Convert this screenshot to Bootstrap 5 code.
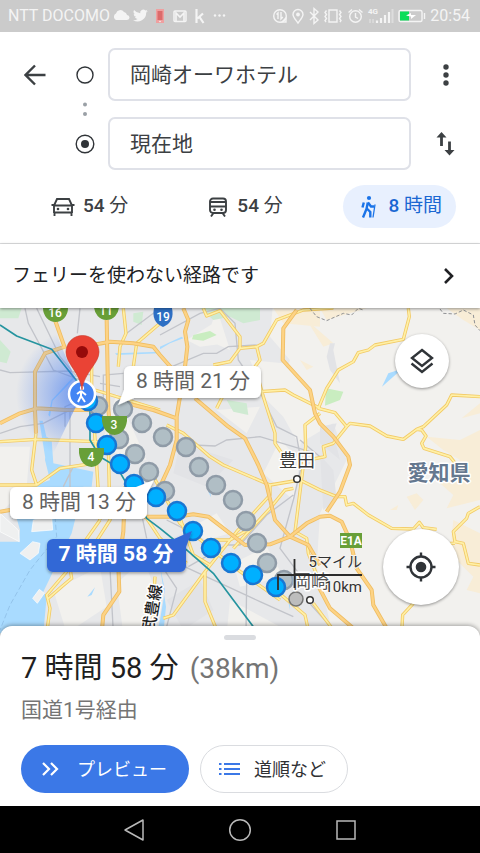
<!DOCTYPE html>
<html lang="ja">
<head>
<meta charset="utf-8">
<meta name="viewport" content="width=device-width, initial-scale=1">
<title>経路</title>
<link href="https://cdn.jsdelivr.net/npm/bootstrap@5.3.0/dist/css/bootstrap.min.css" rel="stylesheet">
<style>
body{font-family:Roboto,"Noto Sans CJK JP",sans-serif;color:#3c4043;background:#fff}
svg{display:block;flex:none}
.icon-btn{border:0;background:none;padding:0;color:#3c4043}
.status-bar{height:32px;background:#cbcbcb;color:#f4f4f4;font-size:16px;padding:0 10px 0 8px}
.route-form{display:grid;grid-template-columns:54px 46px 1fr 69px;grid-template-rows:53px 16px 53px;padding:16px 0 0 8px;place-items:center}
.place-input{width:100%;height:100%;border:2px solid #dfe1e8;border-radius:7px;font-size:21px;color:#3c4043;padding:0 20px 3px;box-shadow:none}
.modes{padding:15px 3px 15px 11px;border-bottom:1px solid #dfe0e2}
.mode-btn{height:43px;border:0;border-radius:22px;background:none;color:#3c4043;font-size:19px;padding:0 14px 0 16px}
.mode-btn b{font-weight:500}
.mode-btn.is-on{background:#e8f0fe;color:#1a67d2}
.notice{height:64px;font-size:19px;color:#202124;padding:0 25px 0 12px;position:relative;z-index:2;background:#fff;box-shadow:0 1px 3px #0006;border:0}
.map{position:relative;min-height:330px;overflow:hidden;background:#f2f1ee}
.map>svg{width:100%;height:100%;position:absolute;inset:0}
.round-btn{position:absolute;border:0;border-radius:50%;background:#fff;color:#303438;box-shadow:0 1px 3px #0006;display:grid;place-items:center;padding:0}
.layers-btn{width:54px;height:54px;right:31px;top:26px}
.locate-btn{width:76px;height:76px;right:21px;top:221px}
.sheet{position:relative;z-index:2;margin-top:-12px;background:#fff;border-radius:12px 12px 0 0;box-shadow:0 -1px 4px #0005;padding:9px 21px 13px}
.handle{width:32px;height:5px;border-radius:3px;background:#dadce0}
.trip-time{font-size:29px;line-height:36px;color:#1f1f1f;margin-top:10px}
.trip-time span{color:#757575;font-size:28px}
.via{font-size:21px;line-height:30px;color:#757575;margin:8px 0 20px}
.pill{height:48px;border-radius:24px;font-size:18px;display:flex;align-items:center}
.pill-main{background:#3b78e7;color:#fff;border:0;padding:0 22px 0 20px;gap:18px}
.pill-line{background:#fff;color:#303134;border:1px solid #dadce0;padding:0 21px 0 18px;gap:14px}
.pill-main:hover{background:#3b78e7;color:#fff}
.sys-nav{height:48px;background:#000;gap:83px}
</style>
<script src="https://cdn.jsdelivr.net/npm/bootstrap@5.3.0/dist/js/bootstrap.bundle.min.js"></script>
</head>
<body>
<div class="d-flex flex-column min-vh-100">
<header class="status-bar d-flex align-items-center justify-content-between">
  <div class="d-flex align-items-center">
    <span>NTT DOCOMO</span>
    <svg class="ms-1" width="114" height="20" viewBox="0 0 114 20" fill="#f4f4f4">
      <path d="M2 14a3.600 3.600 0 0 1 0-6.500 4.500 4.500 0 0 1 8-1.500 4 4 0 0 1 3 3 2.500 2.500 0 0 1 0 5z"/>
      <path transform="translate(19 2) scale(.64)" d="M23 4.600a9 9 0 0 1-2.700.8 4.700 4.700 0 0 0 2-2.600 9 9 0 0 1-3 1.100 4.700 4.700 0 0 0-8 4.300A13.400 13.400 0 0 1 1.600 3.300a4.700 4.700 0 0 0 1.500 6.300 5 5 0 0 1-2.100-.6 4.700 4.700 0 0 0 3.800 4.700 5 5 0 0 1-2.100.1 4.700 4.700 0 0 0 4.400 3.300A9.500 9.500 0 0 1 0 19a13.400 13.400 0 0 0 20.600-11.900A9 9 0 0 0 23 4.600z"/>
      <path d="M42 3h8v14h-8z" fill="#efa0a0"/><path d="M43.500 5h5v9h-5z" fill="#dc6b6b"/><circle cx="46" cy="15.500" r=".8"/>
      <rect x="60" y="5" width="12" height="10.500" rx="1" fill="none" stroke="#f4f4f4" stroke-width="1.500"/><path d="M62 15V7l4 4 4-4v8" fill="none" stroke="#f4f4f4" stroke-width="1.600"/>
      <path d="M82.500 3v14M89 7.500l-5.500 5M85.500 11l4 6" fill="none" stroke="#f4f4f4" stroke-width="2.200"/>
      <circle cx="101" cy="9.500" r="1.200"/><circle cx="105.500" cy="9.500" r="1.200"/><circle cx="110" cy="9.500" r="1.200"/>
    </svg>
  </div>
  <div class="d-flex align-items-center gap-1">
    <svg width="154" height="20" viewBox="0 0 154 20" fill="none" stroke="#f4f4f4" stroke-width="1.400">
      <circle cx="8" cy="10" r="6.300"/><path d="M6 13V7L4.500 8.500M9 6v7l1.800-2M10 16l4-4v4z"/>
      <path d="M26 17c-3-4-5-6-5-8.500a5 5 0 0 1 10 0C31 11 29 13 26 17z"/><circle cx="26" cy="8.500" r="1.200" fill="#f4f4f4"/>
      <path d="M38 6l8 8-4 3.500v-15L46 6l-8 8"/>
      <path d="M57 4h8v12h-8zM54.500 4.500l-1.500 2 1.500 2-1.500 2 1.500 2-1.500 2 1 1.500M67.500 4.500l1.500 2-1.500 2 1.500 2-1.500 2 1.500 2-1 1.500"/>
      <circle cx="83.500" cy="10.500" r="5.800"/><path d="M83.500 7v4l2.500 1.500M76.500 6.500l3.500-3M90.500 6.500L87 3.500"/>
      <path d="M105 17v-2.500M109 17v-5M113 17V9M117 17V6" stroke-width="2.200"/><path d="M120.500 17V3" stroke="#ddd" stroke-width="2"/>
      <path d="M98 17v-4M101 17v-4" stroke="#dedede"/>
      <rect x="127" y="4.500" width="23" height="11" rx="1.500"/><path d="M152.500 7v6"/><path d="M128 5.500h9v9h-9z" fill="#0bdd59" stroke="none"/><path d="M134 9.500l5-2.500v2h5l-5 4v-2.500z" fill="#fff" stroke="none"/>
      <text x="96" y="8" font-size="8" font-weight="700" stroke="none" fill="#f4f4f4">4G</text>
    </svg>
    <span>20:54</span>
  </div>
</header>

<form class="route-form">
  <button type="button" class="icon-btn" aria-label="戻る"><svg width="22" height="22" viewBox="0 0 22 22" fill="none" stroke="currentColor" stroke-width="2.400"><path d="M21.500 11H2M11 1.500L1.500 11l9.500 9.500"/></svg></button>
  <label for="from"><svg width="18" height="18" viewBox="0 0 18 18" fill="none" stroke="#303438" stroke-width="1.400"><circle cx="9" cy="9" r="8"/></svg></label>
  <input class="form-control place-input" id="from" aria-label="出発地" value="岡崎オーワホテル">
  <button type="button" class="icon-btn" aria-label="メニュー"><svg width="8" height="24" viewBox="0 0 8 24" fill="currentColor"><circle cx="4" cy="4" r="2.700"/><circle cx="4" cy="12" r="2.700"/><circle cx="4" cy="20" r="2.700"/></svg></button>
  <span></span>
  <svg width="6" height="16" viewBox="0 0 6 16" fill="#9aa0a6"><circle cx="3" cy="3.500" r="2"/><circle cx="3" cy="13" r="2"/></svg>
  <span></span><span></span><span></span>
  <label for="to"><svg width="20" height="20" viewBox="0 0 20 20" fill="none" stroke="#303438" stroke-width="1.400"><circle cx="10" cy="10" r="8.800"/><circle cx="10" cy="10" r="4" fill="#303438" stroke="none"/></svg></label>
  <input class="form-control place-input" id="to" aria-label="目的地" value="現在地">
  <button type="button" class="icon-btn" aria-label="入れ替え"><svg width="20" height="26" viewBox="0 0 20 26" fill="currentColor"><path d="M.5 6.500L5.500 1l5 5.500H6.900V15H4.100V6.500zM8.500 19l5 5.500 5-5.500h-3.600v-8.500h-2.800V19z"/></svg></button>
</form>

<nav class="modes d-flex" aria-label="交通手段">
  <div class="col d-flex justify-content-center"><button class="mode-btn d-flex align-items-center gap-2">
    <svg width="24" height="20" viewBox="0 0 24 20" fill="none" stroke="currentColor" stroke-width="1.900"><path d="M3 16V8.500L6 2h12l3 6.500V16M3 8.500h18M3 15.500h18M.5 8H4M20 8h3.500M3.500 15v4M20.500 15v4"/><g fill="currentColor" stroke="none"><circle cx="7" cy="12" r="1.300"/><circle cx="17" cy="12" r="1.300"/></g></svg><span><b>54</b> 分</span></button></div>
  <div class="col d-flex justify-content-center"><button class="mode-btn d-flex align-items-center gap-2">
    <svg width="22" height="20" viewBox="0 0 22 20" fill="none" stroke="currentColor" stroke-width="1.900"><rect x="3" y="1.500" width="16" height="14.500" rx="3"/><path d="M3 5h16M3 9.500h16M6.500 16L4 19.500M15.500 16l2.500 3.500"/><g fill="currentColor" stroke="none"><circle cx="7.500" cy="12.800" r="1.300"/><circle cx="14.500" cy="12.800" r="1.300"/></g></svg><span><b>54</b> 分</span></button></div>
  <div class="col d-flex justify-content-center"><button class="mode-btn is-on d-flex align-items-center gap-2" aria-pressed="true">
    <svg width="18" height="24" viewBox="0 0 18 24" fill="none" stroke="#1a73e8"><circle cx="10" cy="3" r="2.100" fill="#1a73e8" stroke="none"/><path d="M8.800 7.500L7.500 14 4 22.500M7.800 13.500l3.500 3.500v5.500M9 7.500l3 4h3" stroke-width="2.400"/><path d="M4.800 7.500L3.500 12.500" stroke-width="2.400"/><path d="M16 9.500L14 22.500" stroke-width="1.300"/></svg><span class="ms-1"><b>8</b> 時間</span></button></div>
</nav>

<button class="notice d-flex align-items-center justify-content-between w-100 text-start">
  <span>フェリーを使わない経路です</span>
  <svg width="12" height="16" viewBox="0 0 12 16" fill="none" stroke="#202124" stroke-width="2.600"><path d="M2 1l7 7-7 7"/></svg>
</button>

<main class="map flex-grow-1">
<svg viewBox="0 308 480 330" preserveAspectRatio="xMidYMin slice" aria-label="地図">
  <defs>
    <radialGradient id="beam" gradientUnits="userSpaceOnUse" cx="82" cy="394" r="66"><stop offset="0" stop-color="#3a75f0" stop-opacity=".75"/><stop offset=".5" stop-color="#3a75f0" stop-opacity=".35"/><stop offset="1" stop-color="#3a75f0" stop-opacity="0"/></radialGradient>
    <filter id="sh" x="-10%" y="-20%" width="120%" height="150%"><feDropShadow dx="0" dy="1.500" stdDeviation="1.500" flood-opacity=".35"/></filter>
    <g id="yellowRoads">
      <path d="M370 25L378 100 360 140 355 200M480 70L410 130 400 200M0 425L110 418 290 425 340 425M275 160V260L290 495 300 660M325 440L330 660 240 800M285 270L480 330M610 25L620 48 660 32 720 110V145L770 140 790 130 830 60 910 30 1000 24M720 145L690 185 640 195M770 140L780 180 765 200 790 290 825 400V430L870 495M780 275L855 270 880 285 960 325M960 340L915 375 917 440 885 695 920 715 925 760 960 850M500 375L550 400 630 470 670 495 810 555 900 540 960 570M650 325L690 245"/>
      <path d="M1225 25L1228 50 1210 118 1125 135 1105 150 1075 158 1060 185 1015 210 980 265 955 325 1005 338 1040 380 1050 370 1110 378 1160 408 1210 418 1250 388 1270 380 1340 315 1355 285 1440 290M1250 388L1265 390 1278 408 1265 430 1272 445 1350 470 1370 495M1040 380L1000 430 970 440 975 470 925 480M960 570L1010 590H1035L1040 615 1060 610 1105 645 1175 685 1240 687 1258 667 1270 683 1310 688M1440 620L1405 640 1400 655 1360 695 1365 725 1390 730 1405 790 1440 795M1350 730H1365M1240 910L1208 945 1205 1000"/>
      <path d="M490 955L520 945 615 815 710 695 810 585V555M615 815V905L650 990M540 655L580 765 630 795M700 745L810 625 855 570 880 565M820 865L915 945 925 990M620 720L690 720 760 680M300 660L240 745 200 815 140 885 150 925 140 1000M210 805L215 835 185 860 145 895M108 400L95 510 110 555H0M110 555L180 505 280 490M440 655L480 715 560 790M460 530L540 670 700 800 840 900M940 910L1000 990M465 830L455 1000"/>
    </g>
    <g id="orangeRoads">
      <path d="M165 60L195 145M250 140L330 125 400 130 460 140 480 165 520 210M195 140L135 160 105 215V330L108 400M320 60L325 330 335 420M0 370L60 340 110 325 200 330 300 330M550 25L565 60 555 95 562 140 555 200 540 290 530 350V420L510 495 480 560M380 310L460 330 530 355M585 295L685 380 735 415 775 495 800 555 825 660 870 710 925 735 960 795M890 30L850 85 848 180 930 270 945 340 960 370 1000 410 1045 470 1050 495 1020 575 980 635"/>
      <path d="M430 650H530L580 643 625 650 735 735 810 733 870 710 920 670 960 650 990 647 1025 665 1050 720 1070 805 1115 870 1120 915 1160 985M940 830L990 925 1060 985M375 560L370 695 355 795 358 875 310 945 305 1000M0 635L30 630"/>
    </g>
  </defs>
  <g transform="translate(0 300) scale(.33333)">
    <path fill="#e7e8ea" d="M0 0H820L810 110 870 180 830 300 900 430 1000 370 1040 480 960 640 950 800 1000 1010H0z"/>
    <g fill="#f2f1ee"><path d="M650 25L690 150 620 120zM750 180L850 190 930 300 900 440 850 350 800 300zM560 120L640 70 680 130 600 140zM350 280L440 480 300 450zM0 440L90 440 80 560 0 640zM650 330L780 320 740 400zM840 420L900 480 880 600 790 520zM560 690L650 640 690 700 620 720zM700 790L800 740 850 830 720 860zM350 850L430 780 480 900 440 1000 370 1000zM690 900L840 980 680 1000zM160 870L300 800 320 920 200 1000z"/></g>
    <g fill="#f8edd7"><path d="M820 25H960V80L850 70zM920 60L1000 130 970 140zM900 180L940 200 920 210zM960 25H1100L980 60zM1340 25H1440V90L1390 60zM1440 310L1385 355 1440 340zM1440 390L1380 420 1280 410 1330 450 1380 480 1320 550 1360 585 1340 625 1440 600zM1220 590L1250 580 1270 600 1245 630zM1170 630L1195 615 1190 630zM1360 660L1440 700V880L1400 870 1420 830 1350 760z"/></g>
    <g fill="#e2e3e6"><path d="M990 130H1005L1000 150 1020 250 990 210 980 170zM960 380L1010 370 1000 400 1020 480 960 430zM960 465L1000 510 1010 600 970 630zM540 430L700 480 620 560 520 520zM500 900L600 840 640 930 550 990z"/></g>
    <g fill="#cfead2"><path d="M0 24H65L55 55H0zM0 120L32 155 20 190 0 185zM600 24H780V60L730 70 690 50 640 60zM680 300L740 310 745 345 700 335zM400 40L430 35 425 75 400 65z"/><path fill="#c9edc0" d="M580 105L630 93 650 105 610 122 576 118zM978 265L1030 275 1020 300 975 317z"/></g>
    <g fill="#a9dbff"><path d="M140 410L155 420 160 490 280 515 275 560 250 560 225 660 215 700 130 875 140 890 130 1000H0V725L58 725 60 690 40 620 100 600 95 560 150 540 135 480zM145 345L155 300 225 225 228 230 158 302 150 350zM480 140L545 110 550 115 510 130 480 148zM345 160L480 155V160L350 165zM1146 260L1165 220 1195 210 1195 217zM262 890L285 862 275 885zM625 575L630 560 633 592zM865 905L870 890V930zM480 800L495 870 480 960 470 1000 490 1000 498 920zM118 362H128L160 500H140z"/></g>
    <g fill="#eff0f0" stroke="#fff" stroke-width="2"><path d="M60 760L98 725 120 730 115 760 90 780zM100 660L155 650 158 690 95 695zM98 895L118 868 133 880 112 910zM0 640L55 690 58 725 0 695z"/></g>
    <path d="M165 650L170 710 90 810 30 915 0 990" stroke="#88b7df" fill="none" stroke-width="2" stroke-dasharray="16 8"/>
    <g fill="none" stroke="#c2c4ca" stroke-width="4">
      <path d="M75 25L85 70 160 210 240 240M110 25L180 170 230 230M0 210L30 218 210 213 300 230M0 400L60 380 130 370 250 310M210 330V600M240 25L232 100M195 380V320L280 285M310 300V225L370 220M360 260L300 250M480 25L380 100M480 215L610 160H650L685 140 770 135M480 105L600 40 660 25 705 70 715 180 780 275 810 340 830 380 890 410 905 495 880 600 840 745 930 865M580 435L645 438 680 420 780 410 880 440 930 455M480 760L565 805 780 905 880 950M740 845L738 1000M530 865L500 980M565 800L680 735H720L800 645 880 585M420 620L440 715M220 500L190 560M330 805L340 1000M580 700L500 660M900 420L960 470M920 900L1010 1000M480 790L530 865"/>
    </g>
    <g fill="none" stroke-linejoin="round">
      <use href="#yellowRoads" stroke="#f2ca66" stroke-width="10"/><use href="#yellowRoads" stroke="#fff0a6" stroke-width="5"/>
      <use href="#orangeRoads" stroke="#efbd62" stroke-width="12"/><use href="#orangeRoads" stroke="#fdd385" stroke-width="7"/>
      <path d="M0 75L50 108 155 148 240 255 270 330V420L300 470 350 500 440 655 480 685 560 750 640 820 760 980 790 1010" stroke="#25949f" stroke-width="5"/>
      <path d="M1320 27L1330 40 1365 42 1390 30 1420 45 1425 75 1440 92M930 25L950 50 980 62 1030 40 1055 45 1075 25 1090 30" stroke="#8f9194" stroke-width="3" stroke-dasharray="10 6"/>
    </g>
  </g>

  <path d="M82 394L56 334 16 340V460H50z" fill="url(#beam)"/>

  <g fill="#b0bec5" stroke="#8f9ba7" stroke-width="2.500">
    <circle cx="98" cy="406" r="9"/><circle cx="119" cy="439" r="9"/><circle cx="123" cy="409" r="9"/><circle cx="142" cy="423" r="9"/><circle cx="163" cy="437" r="9"/><circle cx="186" cy="447" r="9"/><circle cx="135" cy="454" r="9"/><circle cx="149" cy="472" r="9"/><circle cx="199" cy="467" r="9"/><circle cx="216" cy="485" r="9"/><circle cx="165" cy="491" r="9"/><circle cx="233" cy="500" r="9"/><circle cx="246" cy="521" r="9"/><circle cx="257" cy="543" r="9"/><circle cx="267" cy="563" r="9"/><circle cx="284" cy="580" r="9"/>
  </g>
  <g fill="#00b0ff" stroke="#1976d2" stroke-width="2.500">
    <circle cx="88" cy="401" r="9"/><circle cx="96" cy="423" r="9"/><circle cx="107" cy="445" r="9"/><circle cx="120" cy="464" r="9"/><circle cx="134" cy="484" r="9"/><circle cx="156" cy="497" r="9"/><circle cx="177" cy="511" r="9"/><circle cx="193" cy="531" r="9"/><circle cx="211" cy="548" r="9"/><circle cx="231" cy="563" r="9"/><circle cx="253" cy="575" r="9"/><circle cx="276" cy="587" r="9"/>
  </g>
  <circle cx="296" cy="599" r="7" fill="#bdbdbd" stroke="#757575" stroke-width="1.500"/>

  <g fill="#689f38">
    <path d="M43 308H68A12.500 14 0 0 1 43 308zM94 306H119A12.500 14 0 0 1 94 306zM102 416H127V421Q125 434 114.500 435 104 434 102 421zM79 448H104V453Q102 466 91.500 467 81 466 79 453z"/>
    <path d="M340 533h22v15h-22z"/>
  </g>
  <path d="M154 308L172 308Q175 322 163 327 151 322 154 308z" fill="#2d6fc4"/>
  <g fill="#fff" font-size="12" font-weight="500" text-anchor="middle">
    <text x="55" y="317">16</text><text x="106" y="315">11</text><text x="163" y="321">19</text><text x="114" y="429">3</text><text x="91" y="461">4</text><text x="351" y="545" font-weight="700">E1A</text>
  </g>

  <g paint-order="stroke" stroke="#fff" stroke-width="3" stroke-linejoin="round" text-anchor="middle">
    <text x="297" y="467" font-size="18" fill="#3a3a3a">豊田</text>
    <text x="439" y="480" font-size="21" font-weight="700" fill="#65788f">愛知県</text>
    <text x="311" y="588" font-size="18" fill="#555">岡崎</text>
    <text transform="translate(152 608) rotate(-80)" font-size="16" font-weight="500" fill="#222" x="0" y="6">武豊線</text>
  </g>
  <g fill="#fff" stroke="#333" stroke-width="1.500"><circle cx="297" cy="479" r="3.300"/><circle cx="310" cy="600" r="3.300"/></g>
  <path d="M278 590V575H362M294.500 559V588" fill="none" stroke="#2c2c2c" stroke-width="1.800"/>
  <g text-anchor="end" font-size="15" fill="#333" paint-order="stroke" stroke="#f5f4f1" stroke-width="2"><text x="362" y="567">5マイル</text><text x="362" y="592">10km</text></g>

  <g filter="url(#sh)">
    <path d="M130 366H255a6 6 0 0 1 6 6V392a6 6 0 0 1-6 6H134L118 405 124 390V372a6 6 0 0 1 6-6z" fill="#fff"/>
    <path d="M16 487H136L154 480 147 494V513a6 6 0 0 1-6 6H16a6 6 0 0 1-6-6V493a6 6 0 0 1 6-6z" fill="#fff"/>
    <path d="M53 539H174L192 531 186 547V566a6 6 0 0 1-6 6H53a6 6 0 0 1-6-6V545a6 6 0 0 1 6-6z" fill="#3367d6"/>
  </g>
  <g text-anchor="middle" font-size="21" fill="#616161">
    <text x="193" y="388">8 時間 21 分</text><text x="79" y="509">8 時間 13 分</text><text x="116" y="561" fill="#fff" font-weight="700">7 時間 58 分</text>
  </g>

  <circle cx="82" cy="394" r="13" fill="#4285f4" stroke="#fff" stroke-width="2.500"/>
  <g fill="none" stroke="#fff" stroke-width="2"><path d="M81 391V396L78 402M81 396L85 402M81 391L86 395M81 391L77 394"/><circle cx="82" cy="388" r="1.200"/></g>
  <path d="M82 390C80 372 66 364 66 352a16.500 16.500 0 0 1 33 0C99 364 84 372 82 390z" fill="#ea4335" stroke="#c93a2c" stroke-width=".6"/><circle cx="82" cy="352" r="6" fill="#960a0a"/>
</svg>
<button class="round-btn layers-btn" aria-label="レイヤ"><svg width="26" height="26" viewBox="0 0 26 26" fill="none" stroke="currentColor" stroke-width="2.400"><path d="M13 2L23 10 13 18 3 10zM2.500 15.500L13 24l10.500-8.500"/></svg></button>
<button class="round-btn locate-btn" aria-label="現在地を表示"><svg width="30" height="30" viewBox="0 0 30 30" fill="none" stroke="currentColor" stroke-width="2.400"><circle cx="15" cy="15" r="10.500"/><path d="M15 .5V5M15 25v4.500M.5 15H5M25 15h4.500"/><circle cx="15" cy="15" r="5.300" fill="currentColor" stroke="none"/></svg></button>
</main>

<section class="sheet">
  <div class="handle mx-auto"></div>
  <h1 class="trip-time fw-normal mb-0">7 時間 58 分 <span class="ms-1">(38km)</span></h1>
  <p class="via">国道1号経由</p>
  <div class="d-flex" style="gap:11px">
    <button class="btn pill pill-main"><svg width="18" height="16" viewBox="0 0 18 16" fill="none" stroke="currentColor" stroke-width="2.200"><path d="M2 2l6 6-6 6M10 2l6 6-6 6"/></svg>プレビュー</button>
    <button class="btn pill pill-line"><svg width="21" height="14" viewBox="0 0 21 14" fill="none" stroke="#3b78e7" stroke-width="2"><path d="M5 2h16M5 7h16M5 12h16M0 2h2.500M0 7h2.500M0 12h2.500"/></svg>道順など</button>
  </div>
</section>

<footer class="sys-nav d-flex align-items-center justify-content-center">
  <button class="icon-btn" aria-label="戻る"><svg width="22" height="22" viewBox="0 0 22 22" fill="none" stroke="#b9b9b9" stroke-width="1.500" stroke-linejoin="round"><path d="M20 1v20L2 11z"/></svg></button>
  <button class="icon-btn" aria-label="ホーム"><svg width="24" height="24" viewBox="0 0 24 24" fill="none" stroke="#b9b9b9" stroke-width="1.500"><circle cx="12" cy="12" r="10.300"/></svg></button>
  <button class="icon-btn" aria-label="アプリ履歴"><svg width="22" height="22" viewBox="0 0 22 22" fill="none" stroke="#b9b9b9" stroke-width="1.500"><rect x="2" y="2" width="18" height="18"/></svg></button>
</footer>
</div>
</body>
</html>
